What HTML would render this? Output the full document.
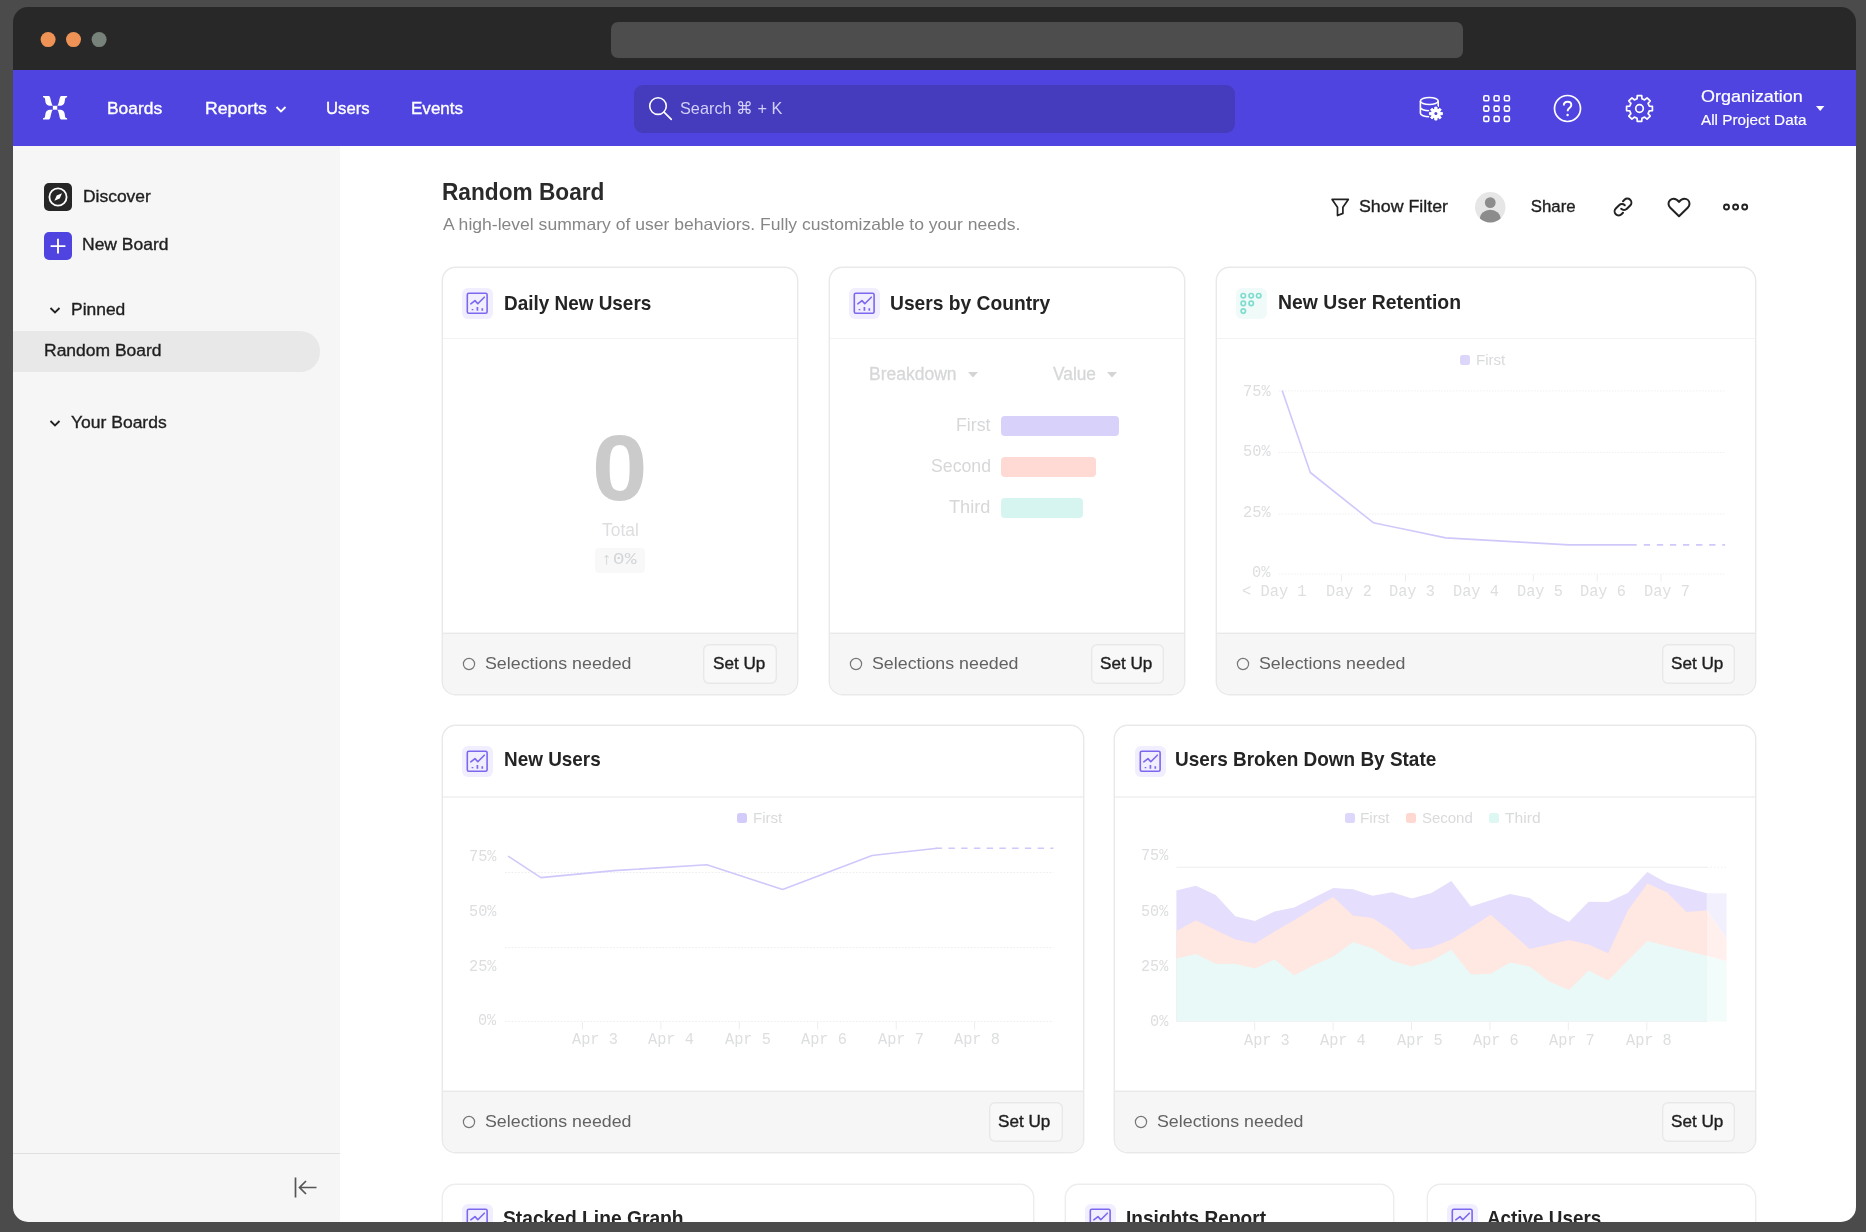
<!DOCTYPE html><html lang="en"><head><meta charset="utf-8"><title>Random Board</title><style>
html,body{margin:0;padding:0}
body{width:1866px;height:1232px;overflow:hidden;background:#4b4b4b;font-family:"Liberation Sans",sans-serif;position:relative}
.win{position:absolute;left:13px;top:7px;width:1843px;height:1215px;border-radius:15px;overflow:hidden;background:transparent}
.pg{will-change:transform;position:absolute;left:-13px;top:-7px;width:1866px;height:1232px}
.t{position:absolute;white-space:nowrap;line-height:1;transform-origin:0 50%;display:block}
.a{position:absolute;display:block}
.card{position:absolute;background:#fff;border-radius:12.500px;overflow:hidden}
.card .hl{position:absolute;left:0;right:0;height:1.800px;background:#f3f3f3}
.card .ft{position:absolute;left:0;right:0;bottom:0;background:#f6f6f6;box-shadow:0 -1.400px 0 0 #e9e9e9}
.btn{position:absolute;background:#f8f8f8;box-shadow:inset 0 0 0 1.400px #e8e8e8;border-radius:6px;box-sizing:border-box}
.ic{position:absolute;width:31px;height:31px;border-radius:6px;background:#f1eeff}
svg{position:absolute;overflow:visible}
.g{display:contents}

</style></head><body>
<div class="win"><div class="pg">
<div class="g chrome">
<div class="a" style="left:13px;top:7px;width:1843px;height:63px;background:#282828"></div>
<svg style="left:0;top:0" width="120" height="70" viewBox="0 0 120 70"><circle cx="48.100" cy="39.600" r="7.500" fill="#ee9355"/><circle cx="73.500" cy="39.600" r="7.500" fill="#ee9355"/><circle cx="99.100" cy="39.600" r="7.500" fill="#77827a"/></svg>
<div class="a" style="left:611px;top:21.500px;width:851.600px;height:36.200px;border-radius:7px;background:#4d4d4d"></div>
<div class="a" style="left:340px;top:146px;width:1516px;height:1076px;background:#fff"></div>
</div>
<header class="g nav">
<div class="a" style="left:13px;top:70px;width:1843px;height:76px;background:#4f44e0"></div>
<div class="a" style="left:634px;top:84.500px;width:600.500px;height:48.300px;border-radius:9px;background:#443bbd"></div>
<svg style="left:43px;top:96.100px" width="24.100" height="23.500" viewBox="0 0 24.100 23.500"><g fill="#fff">
<path d="M0 0H6C7.200 .3 7.600 3.500 8.200 5.800C8.600 7.400 9 8.600 9.700 9.750H6.800C4.600 9.750 3 8.400 2.600 6.500L1.900 2.400C1.800 1.700 1.200 1.300 0 1.200Z"/><path d="M0 0H6C7.200 .3 7.600 3.500 8.200 5.800C8.600 7.400 9 8.600 9.700 9.750H6.800C4.600 9.750 3 8.400 2.600 6.500L1.900 2.400C1.800 1.700 1.200 1.300 0 1.200Z" transform="translate(24.100 0) scale(-1 1)"/><path d="M0 0H6C7.200 .3 7.600 3.500 8.200 5.800C8.600 7.400 9 8.600 9.700 9.750H6.800C4.600 9.750 3 8.400 2.600 6.500L1.900 2.400C1.800 1.700 1.200 1.300 0 1.200Z" transform="translate(0 23.500) scale(1 -1)"/><path d="M0 0H6C7.200 .3 7.600 3.500 8.200 5.800C8.600 7.400 9 8.600 9.700 9.750H6.800C4.600 9.750 3 8.400 2.600 6.500L1.900 2.400C1.800 1.700 1.200 1.300 0 1.200Z" transform="translate(24.100 23.500) scale(-1 -1)"/>
<rect x="9.850" y="9.800" width="4.400" height="3.900"/></g></svg>
<svg style="left:275.200px;top:104.500px" width="12" height="9" viewBox="0 0 12 9"><path d="M1.500 2l4.500 4.500L10.500 2" fill="none" stroke="#fff" stroke-width="1.800"/></svg>
<svg style="left:647px;top:96px" width="26" height="26" viewBox="0 0 26 26"><circle cx="11" cy="10.100" r="8.300" fill="none" stroke="#fff" stroke-width="1.600"/><path d="M17 16.100l7.300 7.300" stroke="#fff" stroke-width="1.600" stroke-linecap="round"/></svg>
<svg style="left:1418px;top:95px" width="28" height="28" viewBox="0 0 28 28" fill="none" stroke="#fff" stroke-width="1.600">
<ellipse cx="11.300" cy="6" rx="8.900" ry="3.500"/><path d="M2.400 6v12.300c0 1.900 4 3.500 8.900 3.500M20.200 6v6M2.400 12.200c0 1.900 4 3.500 8.900 3.500"/>
<path d="M16.72 14.15 L16.78 12.10 L19.02 12.10 L19.08 14.15 L20.21 14.62 L21.71 13.21 L23.29 14.79 L21.88 16.29 L22.35 17.42 L24.40 17.48 L24.40 19.72 L22.35 19.78 L21.88 20.91 L23.29 22.41 L21.71 23.99 L20.21 22.58 L19.08 23.05 L19.02 25.10 L16.78 25.10 L16.72 23.05 L15.59 22.58 L14.09 23.99 L12.51 22.41 L13.92 20.91 L13.45 19.78 L11.40 19.72 L11.40 17.48 L13.45 17.42 L13.92 16.29 L12.51 14.79 L14.09 13.21 L15.59 14.62Z" fill="#fff" stroke="#4f44e0" stroke-width="2.600" paint-order="stroke" stroke-linejoin="round"/>
<path d="M16.72 14.15 L16.78 12.10 L19.02 12.10 L19.08 14.15 L20.21 14.62 L21.71 13.21 L23.29 14.79 L21.88 16.29 L22.35 17.42 L24.40 17.48 L24.40 19.72 L22.35 19.78 L21.88 20.91 L23.29 22.41 L21.71 23.99 L20.21 22.58 L19.08 23.05 L19.02 25.10 L16.78 25.10 L16.72 23.05 L15.59 22.58 L14.09 23.99 L12.51 22.41 L13.92 20.91 L13.45 19.78 L11.40 19.72 L11.40 17.48 L13.45 17.42 L13.92 16.29 L12.51 14.79 L14.09 13.21 L15.59 14.62Z" fill="#fff" stroke="#fff" stroke-width="0.800" stroke-linejoin="round"/>
<circle cx="17.900" cy="18.600" r="1.500" fill="#4f44e0" stroke="none"/></svg>
<svg style="left:1482.700px;top:95.400px" width="28" height="28" viewBox="0 0 28 28" fill="none" stroke="#fff" stroke-width="1.600"><rect x="0.8" y="0.8" width="5" height="5" rx="1.400"/><rect x="11.1" y="0.8" width="5" height="5" rx="1.400"/><rect x="21.4" y="0.8" width="5" height="5" rx="1.400"/><rect x="0.8" y="11.1" width="5" height="5" rx="1.400"/><rect x="11.1" y="11.1" width="5" height="5" rx="1.400"/><rect x="21.4" y="11.1" width="5" height="5" rx="1.400"/><rect x="0.8" y="21.4" width="5" height="5" rx="1.400"/><rect x="11.1" y="21.4" width="5" height="5" rx="1.400"/><rect x="21.4" y="21.4" width="5" height="5" rx="1.400"/></svg>
<svg style="left:1553.200px;top:94.200px" width="29" height="29" viewBox="0 0 29 29" fill="none" stroke="#fff" stroke-width="1.700"><circle cx="14.500" cy="14.500" r="13"/><path d="M10.800 11.500c0-2.200 1.600-3.700 3.800-3.700s3.700 1.400 3.700 3.300c0 3-3.700 3-3.700 6.100" stroke-width="1.900"/><circle cx="14.600" cy="21" r="1.200" fill="#fff" stroke="none"/></svg>
<svg style="left:1624.900px;top:94.200px" width="29" height="29" viewBox="0 0 29 29" fill="none" stroke="#fff" stroke-width="1.700" stroke-linejoin="round"><path d="M12.03 4.81 L12.28 1.59 L16.72 1.59 L16.97 4.81 L19.60 5.90 L22.06 3.80 L25.20 6.94 L23.10 9.40 L24.19 12.03 L27.41 12.28 L27.41 16.72 L24.19 16.97 L23.10 19.60 L25.20 22.06 L22.06 25.20 L19.60 23.10 L16.97 24.19 L16.72 27.41 L12.28 27.41 L12.03 24.19 L9.40 23.10 L6.94 25.20 L3.80 22.06 L5.90 19.60 L4.81 16.97 L1.59 16.72 L1.59 12.28 L4.81 12.03 L5.90 9.40 L3.80 6.94 L6.94 3.80 L9.40 5.90Z"/><circle cx="14.500" cy="14.500" r="3.800"/></svg>
<svg style="left:1815.800px;top:106px" width="9" height="5" viewBox="0 0 9 5"><path d="M0 0h8.400L4.200 5z" fill="#fff"/></svg>
<span class="t" style="left:107.20px;top:101.00px;font-size:16.8px;color:#fff;-webkit-text-stroke:0.35px #fff;transform:scaleX(1.0381);">Boards</span>
<span class="t" style="left:205.20px;top:101.00px;font-size:16.8px;color:#fff;-webkit-text-stroke:0.35px #fff;transform:scaleX(1.0533);">Reports</span>
<span class="t" style="left:325.80px;top:101.00px;font-size:16.8px;color:#fff;-webkit-text-stroke:0.35px #fff;transform:scaleX(0.9948);">Users</span>
<span class="t" style="left:410.80px;top:101.00px;font-size:16.8px;color:#fff;-webkit-text-stroke:0.35px #fff;transform:scaleX(1.0153);">Events</span>
<span class="t" style="left:680.20px;top:100.00px;font-size:16.5px;color:#d3d0f6;transform:scaleX(0.9876);">Search ⌘ + K</span>
<span class="t" style="left:1700.60px;top:89.00px;font-size:16.6px;color:#fff;-webkit-text-stroke:0.2px #fff;transform:scaleX(1.0819);">Organization</span>
<span class="t" style="left:1701.00px;top:113.00px;font-size:14px;color:#fff;-webkit-text-stroke:0.15px #fff;transform:scaleX(1.0924);">All Project Data</span>
</header>
<aside class="g sidebar">
<div class="a" style="left:13px;top:146px;width:327px;height:1076px;background:#f6f6f6"></div>
<div class="a" style="left:13px;top:1152.500px;width:327px;height:1.500px;background:#e0e0e0"></div>
<div class="a" style="left:44px;top:183px;width:28px;height:28px;border-radius:5px;background:#262626"></div>
<svg style="left:44px;top:183px" width="28" height="28" viewBox="0 0 28 28"><circle cx="14" cy="14" r="8.600" fill="none" stroke="#fff" stroke-width="1.800"/><path d="M18 10.300L15.700 15.600L10.400 17.700L12.700 12.400z" fill="#fff"/></svg>
<div class="a" style="left:44px;top:231.500px;width:28px;height:28px;border-radius:5px;background:#4f44e0"></div>
<svg style="left:44px;top:231.500px" width="28" height="28" viewBox="0 0 28 28"><path d="M14 6.700v14.800M6.600 14.100h14.800" stroke="#fff" stroke-width="1.900"/></svg>
<svg style="left:49px;top:306px" width="12" height="9" viewBox="0 0 12 9"><path d="M1.500 2l4.500 4.500L10.500 2" fill="none" stroke="#222" stroke-width="1.800"/></svg>
<div class="a" style="left:13px;top:331px;width:306.500px;height:40.500px;border-radius:0 20px 20px 0;background:#e8e8e8"></div>
<svg style="left:49px;top:418.500px" width="12" height="9" viewBox="0 0 12 9"><path d="M1.500 2l4.500 4.500L10.500 2" fill="none" stroke="#222" stroke-width="1.800"/></svg>
<svg style="left:294px;top:1177px" width="24" height="21" viewBox="0 0 24 21"><path d="M1.500 0.500v20M5.500 10.500h17M12 4l-6.500 6.500L12 17" fill="none" stroke="#555" stroke-width="1.700"/></svg>
<span class="t" style="left:83.30px;top:188.00px;font-size:16.5px;color:#1f1f1f;-webkit-text-stroke:0.35px #1f1f1f;transform:scaleX(1.0563);">Discover</span>
<span class="t" style="left:81.60px;top:236.00px;font-size:16.5px;color:#1f1f1f;-webkit-text-stroke:0.35px #1f1f1f;transform:scaleX(1.0597);">New Board</span>
<span class="t" style="left:71.30px;top:302.00px;font-size:16.7px;color:#1f1f1f;-webkit-text-stroke:0.35px #1f1f1f;transform:scaleX(1.0449);">Pinned</span>
<span class="t" style="left:44.20px;top:343.00px;font-size:16.7px;color:#1f1f1f;-webkit-text-stroke:0.35px #1f1f1f;transform:scaleX(1.0477);">Random Board</span>
<span class="t" style="left:71.30px;top:415.00px;font-size:16.7px;color:#1f1f1f;-webkit-text-stroke:0.35px #1f1f1f;transform:scaleX(1.0489);">Your Boards</span>
</aside>
<section class="g boardhead">
<svg style="left:1330px;top:197px" width="20" height="20" viewBox="0 0 20 20"><path d="M2.100 2.400h16.200l-5.400 7.800v6.200l-5.400 2.100v-8.300z" fill="none" stroke="#222" stroke-width="1.700" stroke-linejoin="round"/></svg>
<svg style="left:1474.600px;top:191.800px" width="30.500" height="30.500" viewBox="0 0 30 30"><defs><clipPath id="av"><circle cx="15" cy="15" r="15"/></clipPath></defs><circle cx="15" cy="15" r="15" fill="#e6e6e6"/><g clip-path="url(#av)" fill="#8c8c8c"><circle cx="15" cy="10.500" r="5.300"/><ellipse cx="15" cy="26.500" rx="10.500" ry="9"/></g></svg>
<svg style="left:1612px;top:196.300px" width="22" height="22" viewBox="0 0 22 22" fill="none" stroke="#222" stroke-width="2" stroke-linecap="round"><path d="M9.200 12.800a4 4 0 0 0 5.700 0l3.300-3.300a4 4 0 0 0-5.700-5.700l-1.500 1.500"/><path d="M12.800 9.200a4 4 0 0 0-5.700 0l-3.300 3.300a4 4 0 0 0 5.700 5.700l1.500-1.500"/></svg>
<svg style="left:1667px;top:197.300px" width="24" height="21" viewBox="0 0 24 21"><path d="M12 19.300L3.300 10.800C1.900 9.400 1.500 8 1.500 6.700 1.500 3.900 3.800 1.800 6.600 1.800c2.100 0 3.900 1.100 5.400 3.200 1.500-2.100 3.300-3.200 5.400-3.200 2.800 0 5.100 2.100 5.100 4.900 0 1.300-.4 2.700-1.800 4.100z" fill="none" stroke="#222" stroke-width="2" stroke-linejoin="round"/></svg>
<svg style="left:1722px;top:202.300px" width="28" height="10" viewBox="0 0 28 10" fill="none" stroke="#222" stroke-width="1.900"><circle cx="4.500" cy="5" r="2.500"/><circle cx="13.600" cy="5" r="2.500"/><circle cx="22.700" cy="5" r="2.500"/></svg>
<span class="t" style="left:442.20px;top:181.00px;font-size:23.2px;color:#2a2a2a;font-weight:700;transform:scaleX(0.9772);">Random Board</span>
<span class="t" style="left:442.50px;top:216.00px;font-size:16.5px;color:#868686;transform:scaleX(1.0637);">A high-level summary of user behaviors. Fully customizable to your needs.</span>
<span class="t" style="left:1359.40px;top:199.00px;font-size:16.8px;color:#1f1f1f;-webkit-text-stroke:0.35px #1f1f1f;transform:scaleX(1.0603);">Show Filter</span>
<span class="t" style="left:1530.80px;top:199.00px;font-size:16.8px;color:#1f1f1f;-webkit-text-stroke:0.35px #1f1f1f;">Share</span>
</section>
<main class="g cards">
<div class="card" style="left:442.9px;top:268.4px;width:354.0px;height:425.3px;box-shadow:0 0 0 1.4px #e9e9e9"><div class="hl" style="top:69.3px"></div><div class="ft" style="height:59.7px"></div></div>
<div class="ic" style="left:462.1px;top:288px"></div>
<svg style="left:462.1px;top:288px" width="31" height="31" viewBox="0 0 31 31" fill="none" stroke="#7b68ee" stroke-width="1.600"><rect x="5.300" y="5.300" width="19.800" height="19.900" rx="1.500"/><path d="M8.800 15.800l4.200-3.200 2.800 3.100 6.500-6.500" stroke-linecap="round" stroke-linejoin="round"/><path d="M10.500 20.900v1.400M15.400 19.100v3.600M20.300 20.300v2.400" stroke-width="1.700"/></svg>
<svg style="left:461.9px;top:657.1px" width="14" height="14" viewBox="0 0 14 14"><circle cx="7" cy="7" r="5.600" fill="none" stroke="#777" stroke-width="1.200"/></svg>
<div class="btn" style="left:703.2px;top:643.5px;width:73.500px;height:40.700px"></div>
<div class="card" style="left:829.7px;top:268.4px;width:354.7px;height:425.3px;box-shadow:0 0 0 1.4px #e9e9e9"><div class="hl" style="top:69.3px"></div><div class="ft" style="height:59.7px"></div></div>
<div class="ic" style="left:848.9px;top:288px"></div>
<svg style="left:848.9px;top:288px" width="31" height="31" viewBox="0 0 31 31" fill="none" stroke="#7b68ee" stroke-width="1.600"><rect x="5.300" y="5.300" width="19.800" height="19.900" rx="1.500"/><path d="M8.800 15.800l4.200-3.200 2.800 3.100 6.500-6.500" stroke-linecap="round" stroke-linejoin="round"/><path d="M10.500 20.900v1.400M15.400 19.100v3.600M20.300 20.300v2.400" stroke-width="1.700"/></svg>
<svg style="left:848.7px;top:657.1px" width="14" height="14" viewBox="0 0 14 14"><circle cx="7" cy="7" r="5.600" fill="none" stroke="#777" stroke-width="1.200"/></svg>
<div class="btn" style="left:1090.7px;top:643.5px;width:73.500px;height:40.700px"></div>
<div class="card" style="left:1216.6px;top:268.4px;width:538.7px;height:425.3px;box-shadow:0 0 0 1.4px #e9e9e9"><div class="hl" style="top:69.3px"></div><div class="ft" style="height:59.7px"></div></div>
<div class="ic" style="left:1235.8px;top:288px;background:#f0fbf9"></div>
<svg style="left:1235.8px;top:288px" width="31" height="31" viewBox="0 0 31 31" fill="none" stroke="#80dccf" stroke-width="1.700"><circle cx="7.3" cy="7.7" r="2.200"/><circle cx="15.2" cy="7.7" r="2.200"/><circle cx="22.7" cy="7.7" r="2.200"/><circle cx="7.3" cy="15.4" r="2.200"/><circle cx="15.2" cy="15.4" r="2.200"/><circle cx="7.3" cy="23.1" r="2.200"/></svg>
<svg style="left:1235.6px;top:657.1px" width="14" height="14" viewBox="0 0 14 14"><circle cx="7" cy="7" r="5.600" fill="none" stroke="#777" stroke-width="1.200"/></svg>
<div class="btn" style="left:1661.6px;top:643.5px;width:73.500px;height:40.700px"></div>
<div class="card" style="left:442.9px;top:726.3px;width:639.9px;height:425.4px;box-shadow:0 0 0 1.4px #e9e9e9"><div class="hl" style="top:70.0px"></div><div class="ft" style="height:59.4px"></div></div>
<div class="ic" style="left:462.1px;top:745.9px"></div>
<svg style="left:462.1px;top:745.9px" width="31" height="31" viewBox="0 0 31 31" fill="none" stroke="#7b68ee" stroke-width="1.600"><rect x="5.300" y="5.300" width="19.800" height="19.900" rx="1.500"/><path d="M8.800 15.800l4.200-3.200 2.800 3.100 6.500-6.500" stroke-linecap="round" stroke-linejoin="round"/><path d="M10.500 20.900v1.400M15.400 19.100v3.600M20.300 20.300v2.400" stroke-width="1.700"/></svg>
<svg style="left:461.9px;top:1115.4px" width="14" height="14" viewBox="0 0 14 14"><circle cx="7" cy="7" r="5.600" fill="none" stroke="#777" stroke-width="1.200"/></svg>
<div class="btn" style="left:989.1px;top:1101.8px;width:73.500px;height:40.700px"></div>
<div class="card" style="left:1114.8px;top:726.3px;width:640.5px;height:425.4px;box-shadow:0 0 0 1.4px #e9e9e9"><div class="hl" style="top:70.0px"></div><div class="ft" style="height:59.4px"></div></div>
<div class="ic" style="left:1135.0px;top:745.9px"></div>
<svg style="left:1135.0px;top:745.9px" width="31" height="31" viewBox="0 0 31 31" fill="none" stroke="#7b68ee" stroke-width="1.600"><rect x="5.300" y="5.300" width="19.800" height="19.900" rx="1.500"/><path d="M8.800 15.800l4.200-3.200 2.800 3.100 6.500-6.500" stroke-linecap="round" stroke-linejoin="round"/><path d="M10.500 20.900v1.400M15.400 19.100v3.600M20.300 20.300v2.400" stroke-width="1.700"/></svg>
<svg style="left:1133.8px;top:1115.4px" width="14" height="14" viewBox="0 0 14 14"><circle cx="7" cy="7" r="5.600" fill="none" stroke="#777" stroke-width="1.200"/></svg>
<div class="btn" style="left:1661.6px;top:1101.8px;width:73.500px;height:40.700px"></div>
<div class="card" style="left:442.9px;top:1184.6px;width:590.6px;height:114.0px;box-shadow:0 0 0 1.4px #ededed"><div class="hl" style="top:69.3px"></div></div>
<div class="ic" style="left:462.1px;top:1204.2px"></div>
<svg style="left:462.1px;top:1204.2px" width="31" height="31" viewBox="0 0 31 31" fill="none" stroke="#7b68ee" stroke-width="1.600"><rect x="5.300" y="5.300" width="19.800" height="19.900" rx="1.500"/><path d="M8.800 15.800l4.200-3.200 2.800 3.100 6.500-6.500" stroke-linecap="round" stroke-linejoin="round"/><path d="M10.500 20.900v1.400M15.400 19.100v3.600M20.300 20.300v2.400" stroke-width="1.700"/></svg>
<div class="card" style="left:1065.5px;top:1184.6px;width:327.7px;height:114.0px;box-shadow:0 0 0 1.4px #ededed"><div class="hl" style="top:69.3px"></div></div>
<div class="ic" style="left:1084.6999999999998px;top:1204.2px"></div>
<svg style="left:1084.6999999999998px;top:1204.2px" width="31" height="31" viewBox="0 0 31 31" fill="none" stroke="#7b68ee" stroke-width="1.600"><rect x="5.300" y="5.300" width="19.800" height="19.900" rx="1.500"/><path d="M8.800 15.800l4.200-3.200 2.800 3.100 6.500-6.500" stroke-linecap="round" stroke-linejoin="round"/><path d="M10.500 20.900v1.400M15.400 19.100v3.600M20.300 20.300v2.400" stroke-width="1.700"/></svg>
<div class="card" style="left:1427.5px;top:1184.6px;width:327.8px;height:114.0px;box-shadow:0 0 0 1.4px #ededed"><div class="hl" style="top:69.3px"></div></div>
<div class="ic" style="left:1446.6999999999998px;top:1204.2px"></div>
<svg style="left:1446.6999999999998px;top:1204.2px" width="31" height="31" viewBox="0 0 31 31" fill="none" stroke="#7b68ee" stroke-width="1.600"><rect x="5.300" y="5.300" width="19.800" height="19.900" rx="1.500"/><path d="M8.800 15.800l4.200-3.200 2.800 3.100 6.500-6.500" stroke-linecap="round" stroke-linejoin="round"/><path d="M10.500 20.900v1.400M15.400 19.100v3.600M20.300 20.300v2.400" stroke-width="1.700"/></svg>
<div class="a" style="left:594.800px;top:548px;width:50px;height:24.800px;border-radius:4px;background:#f8f8f8"></div>
<svg style="left:968px;top:371.500px" width="10" height="6" viewBox="0 0 10 6"><path d="M0 0h10L5 5.500z" fill="#d4d4d4"/></svg>
<svg style="left:1106.500px;top:371.500px" width="10" height="6" viewBox="0 0 10 6"><path d="M0 0h10L5 5.500z" fill="#d4d4d4"/></svg>
<div class="a" style="left:1001px;top:416px;width:117.700px;height:20px;border-radius:4px;background:#d8d1fa"></div>
<div class="a" style="left:1001px;top:457px;width:94.600px;height:20px;border-radius:4px;background:#ffd9d3"></div>
<div class="a" style="left:1001px;top:498px;width:81.500px;height:20px;border-radius:4px;background:#d6f5f0"></div>
<svg style="left:0;top:0" width="1866" height="1232" viewBox="0 0 1866 1232" fill="none"><path d="M1279 390.9H1725" stroke="#f0f0f0" stroke-width="1" stroke-dasharray="1.500 1.500"/><path d="M1279 452.5H1725" stroke="#f0f0f0" stroke-width="1" stroke-dasharray="1.500 1.500"/><path d="M1279 514.1H1725" stroke="#f0f0f0" stroke-width="1" stroke-dasharray="1.500 1.500"/><path d="M1279 574.1H1725" stroke="#f0f0f0" stroke-width="1" stroke-dasharray="1.500 1.500"/><path d="M1341.5 574.5v7" stroke="#ededed" stroke-width="1"/><path d="M1405.5 574.5v7" stroke="#ededed" stroke-width="1"/><path d="M1469.5 574.5v7" stroke="#ededed" stroke-width="1"/><path d="M1533.3 574.5v7" stroke="#ededed" stroke-width="1"/><path d="M1597.2 574.5v7" stroke="#ededed" stroke-width="1"/><path d="M1661 574.5v7" stroke="#ededed" stroke-width="1"/><path d="M1282.200 390.600L1310.300 472.500L1373.300 522.700L1445.700 537.900L1568.700 544.900L1636.700 544.900" stroke="#cfc8fb" stroke-width="1.600" stroke-linejoin="round"/><path d="M1643.800 544.900H1725.100" stroke="#cfc8fb" stroke-width="1.600" stroke-dasharray="6.300 6.770"/><path d="M505 872.5H1053.4" stroke="#eeeeee" stroke-width="1" stroke-dasharray="1.700 1.580"/><path d="M505 947.5H1053.4" stroke="#eeeeee" stroke-width="1" stroke-dasharray="1.700 1.580"/><path d="M505 1021.4H1053.4" stroke="#eeeeee" stroke-width="1" stroke-dasharray="1.700 1.580"/><path d="M582.5 1022v7.5" stroke="#ededed" stroke-width="1"/><path d="M660.9 1022v7.5" stroke="#ededed" stroke-width="1"/><path d="M739.3 1022v7.5" stroke="#ededed" stroke-width="1"/><path d="M817.7 1022v7.5" stroke="#ededed" stroke-width="1"/><path d="M896.2 1022v7.5" stroke="#ededed" stroke-width="1"/><path d="M974.6 1022v7.5" stroke="#ededed" stroke-width="1"/><path d="M508.100 856.100L540.900 877.600L614 870.600L706.900 864.700L782.600 889.500L872.100 855.500L937.400 848.200" stroke="#cfc8fb" stroke-width="1.600" stroke-linejoin="round"/><path d="M935.700 848.200H1053.400" stroke="#cfc8fb" stroke-width="1.600" stroke-dasharray="6.400 6.340"/></svg>
<div class="a" style="left:1460px;top:354.7px;width:10px;height:10px;border-radius:2.500px;background:#dcd6fb"></div>
<div class="a" style="left:737.2px;top:812.6px;width:10px;height:10px;border-radius:2.500px;background:#d3ccfa"></div>
<svg style="left:0;top:0" width="1866" height="1232" viewBox="0 0 1866 1232" fill="none"><path d="M1176.400 867.200H1707" stroke="#ededed" stroke-width="1"/><path d="M1707 867.200H1726" stroke="#efefef" stroke-width="1" stroke-dasharray="1.500 2"/><path d="M1176.4 1021.6 L1176.4 890.5 L1196.0 885.7 L1215.7 895.0 L1235.3 916.3 L1254.9 921.1 L1274.5 911.4 L1294.1 907.6 L1313.7 897.8 L1333.3 888.1 L1353.0 889.3 L1372.6 895.7 L1392.2 892.2 L1411.8 898.6 L1431.4 893.0 L1451.3 880.9 L1470.9 906.6 L1490.5 900.2 L1510.1 894.1 L1529.7 898.1 L1549.4 912.3 L1569.0 921.9 L1588.6 901.8 L1608.2 902.1 L1627.8 893.0 L1647.4 872.1 L1667.0 883.0 L1686.7 888.1 L1706.9 893.3 L1706.9 1021.6Z" fill="#e5defc" /><path d="M1176.4 1021.6 L1176.4 931.1 L1196.0 920.3 L1215.7 929.9 L1235.3 939.6 L1254.9 943.6 L1274.5 931.5 L1294.1 920.3 L1313.7 908.2 L1333.3 897.0 L1353.0 915.5 L1372.6 917.9 L1392.2 930.7 L1411.8 949.7 L1431.4 947.6 L1451.3 939.6 L1470.9 927.5 L1490.5 914.7 L1510.1 931.5 L1529.7 948.9 L1549.4 944.4 L1569.0 940.1 L1588.6 944.4 L1608.2 953.2 L1627.8 910.6 L1647.4 883.6 L1667.0 892.2 L1686.7 911.9 L1706.9 910.3 L1706.9 1021.6Z" fill="#ffe7e2" /><path d="M1176.4 1021.6 L1176.4 958.4 L1196.0 954.1 L1215.7 963.7 L1235.3 963.7 L1254.9 968.5 L1274.5 959.4 L1294.1 975.3 L1313.7 965.3 L1333.3 956.5 L1353.0 942.0 L1372.6 948.4 L1392.2 960.5 L1411.8 966.6 L1431.4 961.0 L1451.3 949.7 L1470.9 974.6 L1490.5 973.8 L1510.1 962.4 L1529.7 966.4 L1549.4 981.4 L1569.0 989.9 L1588.6 970.6 L1608.2 980.6 L1627.8 960.5 L1647.4 940.9 L1667.0 946.0 L1686.7 950.8 L1706.9 956.0 L1706.9 1021.6Z" fill="#e8f9f7" /><path d="M1706.9 893.3 L1726.5 893.3 L1726.5 938.8 L1706.9 910.3Z" fill="#f3f0fe" /><path d="M1706.9 910.3 L1726.5 938.8 L1726.5 961.3 L1706.9 956.0Z" fill="#fff0ed" /><path d="M1706.9 956.0 L1726.5 961.3 L1726.5 1021.6 L1706.9 1021.6Z" fill="#f2fcfa" /><path d="M1254.7 1022.3v8" stroke="#ededed" stroke-width="1"/><path d="M1333.1 1022.3v8" stroke="#ededed" stroke-width="1"/><path d="M1411.5 1022.3v8" stroke="#ededed" stroke-width="1"/><path d="M1489.9 1022.3v8" stroke="#ededed" stroke-width="1"/><path d="M1568.3 1022.3v8" stroke="#ededed" stroke-width="1"/><path d="M1646.8 1022.3v8" stroke="#ededed" stroke-width="1"/></svg>
<div class="a" style="left:1344.7px;top:812.6px;width:10px;height:10px;border-radius:2.500px;background:#ddd7fb"></div>
<div class="a" style="left:1406.2px;top:812.6px;width:10px;height:10px;border-radius:2.500px;background:#ffd8d1"></div>
<div class="a" style="left:1489.2px;top:812.6px;width:10px;height:10px;border-radius:2.500px;background:#ddf7f3"></div>
<span class="t" style="left:503.50px;top:293.00px;font-size:20.2px;color:#242424;font-weight:700;transform:scaleX(0.9376);">Daily New Users</span>
<span class="t" style="left:485.40px;top:655.00px;font-size:17px;color:#626262;transform:scaleX(1.0472);">Selections needed</span>
<span class="t" style="left:712.50px;top:655.00px;font-size:16.5px;color:#1f1f1f;-webkit-text-stroke:0.4px #1f1f1f;transform:scaleX(1.0366);">Set Up</span>
<span class="t" style="left:890.30px;top:293.00px;font-size:20.2px;color:#242424;font-weight:700;transform:scaleX(0.9526);">Users by Country</span>
<span class="t" style="left:872.20px;top:655.00px;font-size:17px;color:#626262;transform:scaleX(1.0472);">Selections needed</span>
<span class="t" style="left:1100.00px;top:655.00px;font-size:16.5px;color:#1f1f1f;-webkit-text-stroke:0.4px #1f1f1f;transform:scaleX(1.0366);">Set Up</span>
<span class="t" style="left:1278.20px;top:292.00px;font-size:20.2px;color:#242424;font-weight:700;transform:scaleX(0.9596);">New User Retention</span>
<span class="t" style="left:1259.10px;top:655.00px;font-size:17px;color:#626262;transform:scaleX(1.0472);">Selections needed</span>
<span class="t" style="left:1670.90px;top:655.00px;font-size:16.5px;color:#1f1f1f;-webkit-text-stroke:0.4px #1f1f1f;transform:scaleX(1.0366);">Set Up</span>
<span class="t" style="left:503.50px;top:749.00px;font-size:20.2px;color:#242424;font-weight:700;transform:scaleX(0.9367);">New Users</span>
<span class="t" style="left:485.40px;top:1113.00px;font-size:17px;color:#626262;transform:scaleX(1.0472);">Selections needed</span>
<span class="t" style="left:998.40px;top:1113.00px;font-size:16.5px;color:#1f1f1f;-webkit-text-stroke:0.4px #1f1f1f;transform:scaleX(1.0366);">Set Up</span>
<span class="t" style="left:1175.40px;top:749.00px;font-size:20.2px;color:#242424;font-weight:700;transform:scaleX(0.9391);">Users Broken Down By State</span>
<span class="t" style="left:1157.30px;top:1113.00px;font-size:17px;color:#626262;transform:scaleX(1.0472);">Selections needed</span>
<span class="t" style="left:1670.90px;top:1113.00px;font-size:16.5px;color:#1f1f1f;-webkit-text-stroke:0.4px #1f1f1f;transform:scaleX(1.0366);">Set Up</span>
<span class="t" style="left:502.70px;top:1208.00px;font-size:20.2px;color:#242424;font-weight:700;transform:scaleX(0.9526);">Stacked Line Graph</span>
<span class="t" style="left:1126.10px;top:1208.00px;font-size:20.2px;color:#242424;font-weight:700;transform:scaleX(0.9456);">Insights Report</span>
<span class="t" style="left:1486.70px;top:1208.00px;font-size:20.2px;color:#242424;font-weight:700;transform:scaleX(0.9336);">Active Users</span>
<span class="t" style="left:591.80px;top:421.00px;font-size:93.5px;color:#cbcbcb;font-weight:700;transform:scaleX(1.0670);">0</span>
<span class="t" style="left:601.60px;top:522.00px;font-size:17.5px;color:#dddee0;transform:scaleX(0.9954);">Total</span>
<span class="t" style="left:600.50px;top:552.00px;font-size:16.5px;color:#d3d6d9;font-family:'Liberation Mono', monospace;transform:scaleX(1.1945);">↑0%</span>
<span class="t" style="left:869.00px;top:366.00px;font-size:17.5px;color:#d6d7d9;-webkit-text-stroke:0.3px #d6d7d9;">Breakdown</span>
<span class="t" style="left:1053.00px;top:366.00px;font-size:17.5px;color:#d6d7d9;-webkit-text-stroke:0.3px #d6d7d9;transform:scaleX(0.9892);">Value</span>
<span class="t" style="left:956.30px;top:417.00px;font-size:17.5px;color:#d6d7d9;transform:scaleX(1.0138);">First</span>
<span class="t" style="left:930.80px;top:458.00px;font-size:17.5px;color:#d6d7d9;transform:scaleX(1.0108);">Second</span>
<span class="t" style="left:949.30px;top:499.00px;font-size:17.5px;color:#d6d7d9;transform:scaleX(1.0357);">Third</span>
<span class="t" style="left:1476.00px;top:352.00px;font-size:15px;color:#d9dadc;transform:scaleX(1.0044);">First</span>
<span class="t" style="left:1243.10px;top:384.00px;font-size:16px;color:#dddee0;font-family:'Liberation Mono', monospace;transform:scaleX(0.9579);">75%</span>
<span class="t" style="left:1243.10px;top:444.00px;font-size:16px;color:#dddee0;font-family:'Liberation Mono', monospace;transform:scaleX(0.9579);">50%</span>
<span class="t" style="left:1243.10px;top:505.00px;font-size:16px;color:#dddee0;font-family:'Liberation Mono', monospace;transform:scaleX(0.9579);">25%</span>
<span class="t" style="left:1252.30px;top:565.00px;font-size:16px;color:#dddee0;font-family:'Liberation Mono', monospace;transform:scaleX(0.9582);">0%</span>
<span class="t" style="left:1242.00px;top:584.00px;font-size:16px;color:#dddee0;font-family:'Liberation Mono', monospace;transform:scaleX(0.9610);">&lt; Day 1</span>
<span class="t" style="left:1325.70px;top:584.00px;font-size:16px;color:#dddee0;font-family:'Liberation Mono', monospace;transform:scaleX(0.9539);">Day 2</span>
<span class="t" style="left:1389.32px;top:584.00px;font-size:16px;color:#dddee0;font-family:'Liberation Mono', monospace;transform:scaleX(0.9539);">Day 3</span>
<span class="t" style="left:1452.94px;top:584.00px;font-size:16px;color:#dddee0;font-family:'Liberation Mono', monospace;transform:scaleX(0.9539);">Day 4</span>
<span class="t" style="left:1516.56px;top:584.00px;font-size:16px;color:#dddee0;font-family:'Liberation Mono', monospace;transform:scaleX(0.9539);">Day 5</span>
<span class="t" style="left:1580.18px;top:584.00px;font-size:16px;color:#dddee0;font-family:'Liberation Mono', monospace;transform:scaleX(0.9539);">Day 6</span>
<span class="t" style="left:1643.80px;top:584.00px;font-size:16px;color:#dddee0;font-family:'Liberation Mono', monospace;transform:scaleX(0.9539);">Day 7</span>
<span class="t" style="left:753.40px;top:810.00px;font-size:15px;color:#d9dadc;transform:scaleX(1.0044);">First</span>
<span class="t" style="left:469.10px;top:849.00px;font-size:16px;color:#dddee0;font-family:'Liberation Mono', monospace;transform:scaleX(0.9544);">75%</span>
<span class="t" style="left:469.10px;top:904.00px;font-size:16px;color:#dddee0;font-family:'Liberation Mono', monospace;transform:scaleX(0.9544);">50%</span>
<span class="t" style="left:469.10px;top:959.00px;font-size:16px;color:#dddee0;font-family:'Liberation Mono', monospace;transform:scaleX(0.9544);">25%</span>
<span class="t" style="left:478.40px;top:1013.00px;font-size:16px;color:#dddee0;font-family:'Liberation Mono', monospace;transform:scaleX(0.9478);">0%</span>
<span class="t" style="left:572.00px;top:1032.00px;font-size:16px;color:#dddee0;font-family:'Liberation Mono', monospace;transform:scaleX(0.9559);">Apr 3</span>
<span class="t" style="left:648.40px;top:1032.00px;font-size:16px;color:#dddee0;font-family:'Liberation Mono', monospace;transform:scaleX(0.9559);">Apr 4</span>
<span class="t" style="left:724.80px;top:1032.00px;font-size:16px;color:#dddee0;font-family:'Liberation Mono', monospace;transform:scaleX(0.9559);">Apr 5</span>
<span class="t" style="left:801.20px;top:1032.00px;font-size:16px;color:#dddee0;font-family:'Liberation Mono', monospace;transform:scaleX(0.9559);">Apr 6</span>
<span class="t" style="left:877.60px;top:1032.00px;font-size:16px;color:#dddee0;font-family:'Liberation Mono', monospace;transform:scaleX(0.9559);">Apr 7</span>
<span class="t" style="left:954.00px;top:1032.00px;font-size:16px;color:#dddee0;font-family:'Liberation Mono', monospace;transform:scaleX(0.9559);">Apr 8</span>
<span class="t" style="left:1360.40px;top:810.00px;font-size:15px;color:#d9dadc;transform:scaleX(1.0147);">First</span>
<span class="t" style="left:1421.90px;top:810.00px;font-size:15px;color:#d9dadc;">Second</span>
<span class="t" style="left:1504.90px;top:810.00px;font-size:15px;color:#d9dadc;transform:scaleX(1.0413);">Third</span>
<span class="t" style="left:1141.10px;top:848.00px;font-size:16px;color:#dddee0;font-family:'Liberation Mono', monospace;transform:scaleX(0.9475);">75%</span>
<span class="t" style="left:1141.10px;top:904.00px;font-size:16px;color:#dddee0;font-family:'Liberation Mono', monospace;transform:scaleX(0.9475);">50%</span>
<span class="t" style="left:1141.10px;top:959.00px;font-size:16px;color:#dddee0;font-family:'Liberation Mono', monospace;transform:scaleX(0.9475);">25%</span>
<span class="t" style="left:1149.90px;top:1014.00px;font-size:16px;color:#dddee0;font-family:'Liberation Mono', monospace;transform:scaleX(0.9530);">0%</span>
<span class="t" style="left:1243.80px;top:1033.00px;font-size:16px;color:#dddee0;font-family:'Liberation Mono', monospace;transform:scaleX(0.9518);">Apr 3</span>
<span class="t" style="left:1320.20px;top:1033.00px;font-size:16px;color:#dddee0;font-family:'Liberation Mono', monospace;transform:scaleX(0.9518);">Apr 4</span>
<span class="t" style="left:1396.60px;top:1033.00px;font-size:16px;color:#dddee0;font-family:'Liberation Mono', monospace;transform:scaleX(0.9518);">Apr 5</span>
<span class="t" style="left:1473.00px;top:1033.00px;font-size:16px;color:#dddee0;font-family:'Liberation Mono', monospace;transform:scaleX(0.9518);">Apr 6</span>
<span class="t" style="left:1549.40px;top:1033.00px;font-size:16px;color:#dddee0;font-family:'Liberation Mono', monospace;transform:scaleX(0.9518);">Apr 7</span>
<span class="t" style="left:1625.80px;top:1033.00px;font-size:16px;color:#dddee0;font-family:'Liberation Mono', monospace;transform:scaleX(0.9518);">Apr 8</span>
</main>
</div></div></body></html>
